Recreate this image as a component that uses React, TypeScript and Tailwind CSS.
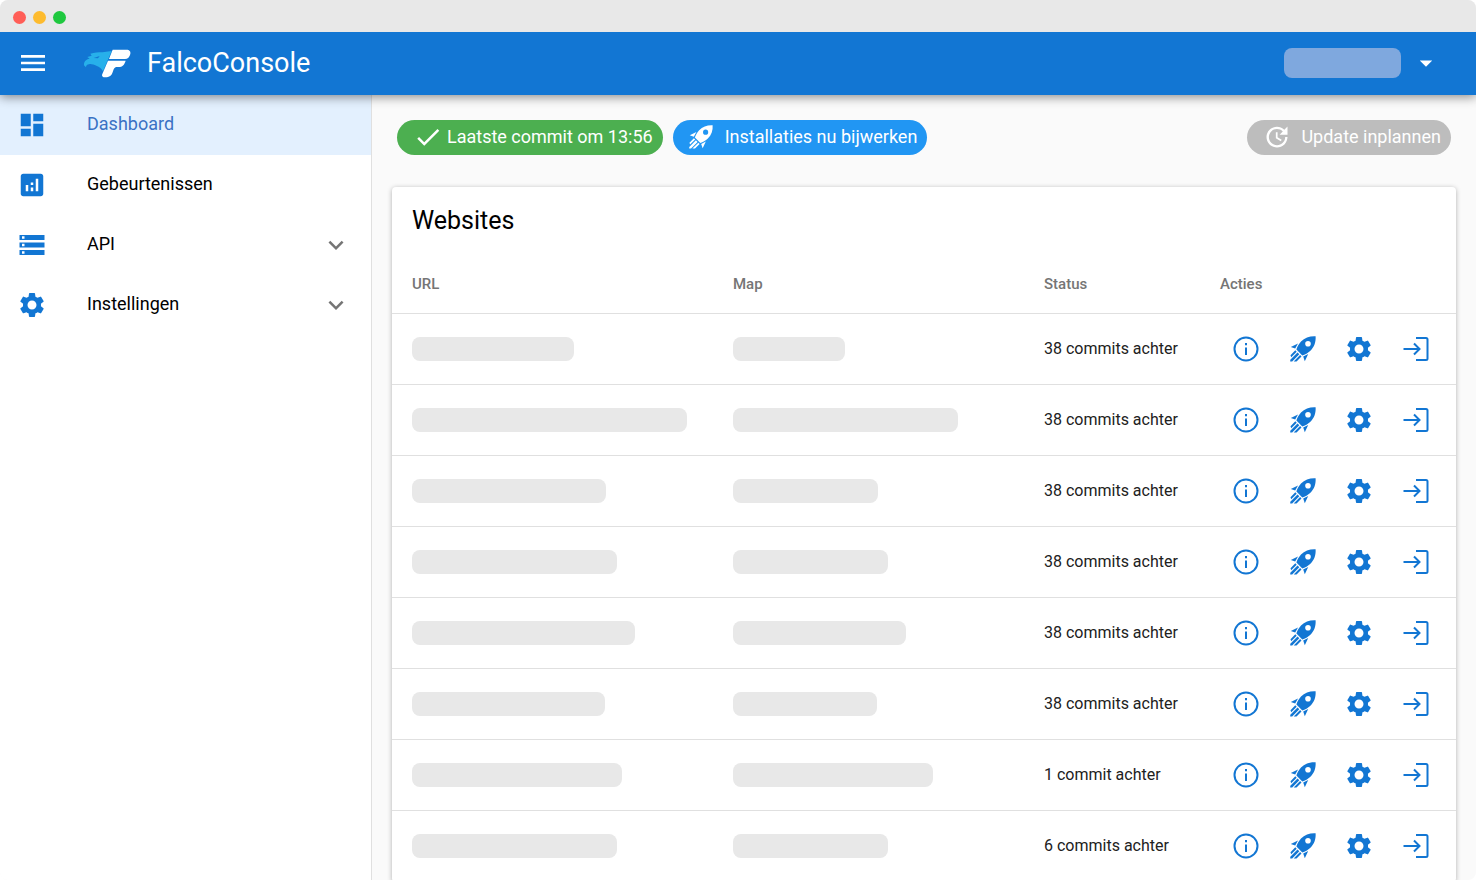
import type { ReactNode } from 'react';
import {
  MdAnalytics,
  MdArrowDropDown,
  MdCheck,
  MdDashboard,
  MdExpandMore,
  MdMenu,
  MdSettings,
  MdStorage,
  MdUpdate,
} from 'react-icons/md';

const sites = [
  { url: 162, map: 112, status: '38 commits achter' },
  { url: 275, map: 225, status: '38 commits achter' },
  { url: 194, map: 145, status: '38 commits achter' },
  { url: 205, map: 155, status: '38 commits achter' },
  { url: 223, map: 173, status: '38 commits achter' },
  { url: 193, map: 144, status: '38 commits achter' },
  { url: 210, map: 200, status: '1 commit achter' },
  { url: 205, map: 155, status: '6 commits achter' },
];

function FalcoLogo() {
  return (
    <svg className="h-[31px] w-[49px]" viewBox="24 26 147 93" aria-hidden="true">
      <path
        fill="#27b0ea"
        d="M27 78C26 68 32 60 44 58L37 53L50 49L46 43C58 40 70 39 82 39L110 35L84 96C80 88 74 82 64 79C56 76 48 73 42 75C36 76 33 79 33 84Z"
      />
      <path fill="#1276d3" d="M56 56L74 50L69 57Z" />
      <path
        fill="#fff"
        d="M113 31H155C163 31 168 36 166 44C164 53 158 59 150 59H102ZM99 64H152C148 77 142 83 131 83H123C118 85 116 89 114 96C110 110 103 114 91 114C84 114 79 111 82 104Z"
      />
    </svg>
  );
}

function RocketIcon({ className = 'size-[26px]' }: { className?: string }) {
  return (
    <svg className={className} viewBox="0 0 26 26" fill="currentColor" aria-hidden="true">
      <path
        fillRule="evenodd"
        d="M25.6.3C20 0 14.8 1.6 11 5.6C8.4 8.4 7 11.5 6.4 13.5L12.3 19.4C15 18.6 18 17 20.4 14.7C24.4 10.8 26 6 25.6.3ZM18 5A2.8 2.8 0 1 0 18 10.6A2.8 2.8 0 1 0 18 5Z"
      />
      <path d="M8 7.6L.8 11L5.2 12.6ZM18.2 18L14.8 25.2L13.2 20.6Z" />
      <path d="M5.3 14.3L6.7 15.7L1.2 21.2L.5 19.2ZM7.5 16.5L9.3 18.3L2.2 25.4L.2 25.4L.3 23.7ZM10.1 19.1L11.5 20.5L6.5 25.5H3.7Z" />
    </svg>
  );
}

function InfoIcon() {
  return (
    <svg className="size-[26px]" viewBox="0 0 26 26" fill="none" stroke="currentColor" strokeWidth="2" aria-hidden="true">
      <circle cx="13" cy="13" r="11.5" />
      <path d="M13 11.5V19" />
      <path d="M13 7V9.2" />
    </svg>
  );
}

function LoginIcon() {
  return (
    <svg className="size-[26px]" viewBox="0 0 26 26" fill="none" stroke="currentColor" strokeWidth="2" aria-hidden="true">
      <path d="M13 2H23Q24.5 2 24.5 3.5V22.5Q24.5 24 23 24H13" />
      <path d="M0.5 13H16.5M11 7.5L16.5 13L11 18.5" />
    </svg>
  );
}

function NavItem({ icon, label, active, expandable }: { icon: ReactNode; label: string; active?: boolean; expandable?: boolean }) {
  return (
    <li>
      <a
        href="#"
        className={`flex h-[60px] items-center pr-5 pl-[17px] text-lg ${active ? 'bg-[#e3f0fe] text-[#3a72c4]' : 'text-black'}`}
      >
        <span className="text-[#1276d3]">{icon}</span>
        <span className="ml-10 flex-1 pb-0.5">{label}</span>
        {expandable && <MdExpandMore size={30} className="text-[#757575]" />}
      </a>
    </li>
  );
}

function ActionButton({ label, children }: { label: string; children: ReactNode }) {
  return (
    <button type="button" aria-label={label} className="flex size-7 items-center justify-center">
      {children}
    </button>
  );
}

export default function App() {
  return (
    <div className="flex h-screen flex-col overflow-hidden rounded-lg bg-[#fafafa] font-[Roboto,sans-serif] text-black">
      {/* Window bar */}
      <div className="relative z-20 flex h-8 shrink-0 items-center gap-[7px] bg-[#e8e8e8] pt-0.5 pl-[13px]">
        <span className="size-[13px] rounded-full bg-[#ff5e57]" />
        <span className="size-[13px] rounded-full bg-[#fdbb2e]" />
        <span className="size-[13px] rounded-full bg-[#1fc83f]" />
      </div>

      <header className="relative z-10 flex h-[63px] shrink-0 items-center bg-[#1276d3] pr-[35px] pb-px pl-[17px] text-white shadow-[0_2px_10px_rgba(0,0,0,0.45)]">
        <button type="button" aria-label="Menu">
          <MdMenu size={32} />
        </button>
        <a href="#" className="ml-[34px] flex items-center gap-[15px] text-[27px]">
          <FalcoLogo />
          FalcoConsole
        </a>
        <button type="button" aria-label="Account" className="ml-auto flex items-center gap-2.5">
          <span className="h-[30px] w-[117px] rounded-lg bg-[#7fa8de]" />
          <MdArrowDropDown size={30} />
        </button>
      </header>

      <div className="flex min-h-0 flex-1">
        <nav className="w-[372px] shrink-0 border-r border-[#e0e0e0] bg-white">
          <ul>
            <NavItem icon={<MdDashboard size={30} />} label="Dashboard" active />
            <NavItem icon={<MdAnalytics size={30} />} label="Gebeurtenissen" />
            <NavItem icon={<MdStorage size={30} />} label="API" expandable />
            <NavItem icon={<MdSettings size={30} />} label="Instellingen" expandable />
          </ul>
        </nav>

        <main className="min-w-0 flex-1 overflow-hidden px-5 pt-[25px]">
          <div className="flex gap-2.5 px-[5px] text-lg text-white">
            <button type="button" className="flex h-[35px] items-center gap-1 rounded-full bg-[#4caf50] pr-2.5 pb-0.5 pl-4">
              <MdCheck size={30} />
              Laatste commit om 13:56
            </button>
            <button type="button" className="flex h-[35px] items-center gap-3 rounded-full bg-[#2196f3] pr-2.5 pb-0.5 pl-4">
              <RocketIcon className="size-6" />
              Installaties nu bijwerken
            </button>
            <button type="button" className="ml-auto flex h-[35px] items-center gap-2.5 rounded-full bg-[#bdbdbd] pr-2.5 pb-0.5 pl-4">
              <MdUpdate size={28} />
              Update inplannen
            </button>
          </div>

          {/* Websites overview */}
          <section className="mt-8 rounded bg-white shadow-[0_1px_5px_rgba(0,0,0,0.3)]">
            <h1 className="px-5 pt-4 text-[25px] leading-9">Websites</h1>
            <table className="w-full table-fixed text-left">
              <thead>
                <tr className="h-[74px] border-b border-[#e0e0e0] text-[15px] text-[#757575]">
                  <th className="w-[321px] px-5 pb-[17px] align-bottom font-medium">URL</th>
                  <th className="w-[311px] px-5 pb-[17px] align-bottom font-medium">Map</th>
                  <th className="w-44 px-5 pb-[17px] align-bottom font-medium">Status</th>
                  <th className="px-5 pb-[17px] align-bottom font-medium">Acties</th>
                </tr>
              </thead>
              <tbody>
                {sites.map((site, i) => (
                  <tr key={i} className="h-[71px] border-b border-[#e0e0e0]">
                    <td className="px-5">
                      <div className="h-6 rounded-lg bg-[#e8e8e8]" style={{ width: site.url }} />
                    </td>
                    <td className="px-5">
                      <div className="h-6 rounded-lg bg-[#e8e8e8]" style={{ width: site.map }} />
                    </td>
                    <td className="px-5 text-base whitespace-nowrap text-[#212121]">{site.status}</td>
                    <td className="pr-[26px] pl-8">
                      <div className="flex items-center justify-between text-[#1276d3]">
                        <ActionButton label="Informatie">
                          <InfoIcon />
                        </ActionButton>
                        <ActionButton label="Bijwerken">
                          <RocketIcon />
                        </ActionButton>
                        <ActionButton label="Instellingen">
                          <MdSettings size={30} className="shrink-0" />
                        </ActionButton>
                        <ActionButton label="Inloggen">
                          <LoginIcon />
                        </ActionButton>
                      </div>
                    </td>
                  </tr>
                ))}
              </tbody>
            </table>
          </section>
        </main>
      </div>
    </div>
  );
}
